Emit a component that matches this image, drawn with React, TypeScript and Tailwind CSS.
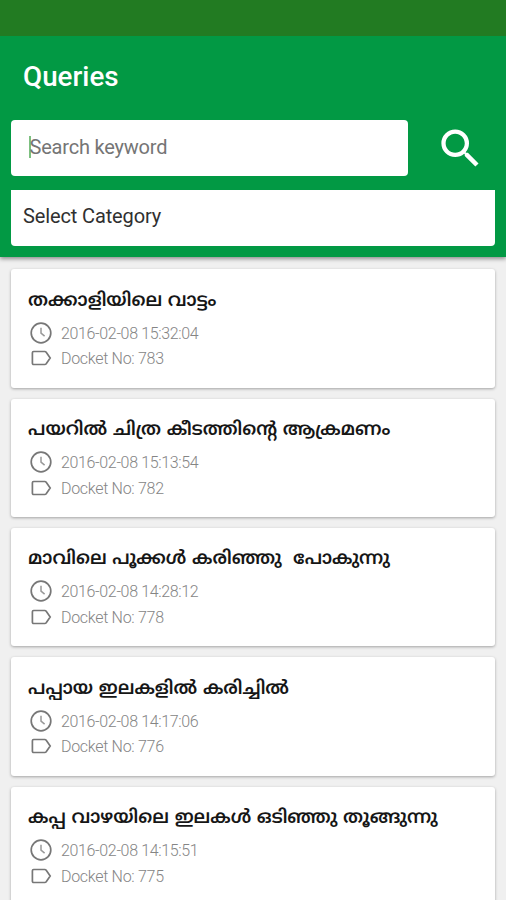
import { MdSearch } from "react-icons/md";

interface Query {
  title: string;
  date: string;
  docket: number;
}

const QUERIES: Query[] = [
  { title: "തക്കാളിയിലെ വാട്ടം", date: "2016-02-08 15:32:04", docket: 783 },
  { title: "പയറിൽ ചിത്ര കീടത്തിന്റെ ആക്രമണം", date: "2016-02-08 15:13:54", docket: 782 },
  { title: "മാവിലെ പൂക്കൾ കരിഞ്ഞു  പോകുന്നു", date: "2016-02-08 14:28:12", docket: 778 },
  { title: "പപ്പായ ഇലകളിൽ കരിച്ചിൽ", date: "2016-02-08 14:17:06", docket: 776 },
  { title: "കപ്പ വാഴയിലെ ഇലകൾ ഒടിഞ്ഞു തൂങ്ങുന്നു", date: "2016-02-08 14:15:51", docket: 775 },
];

function ClockIcon() {
  return (
    <svg viewBox="0 0 24 24" className="size-6 shrink-0" fill="none" stroke="#777" strokeWidth="1.7">
      <circle cx="12" cy="12" r="9.8" />
      <path d="M12 6.8v5.4l3.6 3" stroke="#999" strokeWidth="1.5" />
    </svg>
  );
}

function LabelIcon() {
  return (
    <svg viewBox="0 0 24 24" className="size-6 shrink-0" fill="none" stroke="#777" strokeWidth="1.7">
      <path d="M4.6 5.5h11.2c.6 0 1.1.3 1.4.7l4 5.8-4 5.8c-.3.4-.8.7-1.4.7H4.6c-.7 0-1.2-.5-1.2-1.2V6.7c0-.7.5-1.2 1.2-1.2z" />
    </svg>
  );
}

/**
 * QueryCard
 *
 * One submitted query with its date and docket number.
 */
function QueryCard({ query }: { query: Query }) {
  return (
    <article className="h-[118.3px] shrink-0 rounded-[3px] bg-white pl-[18px] pt-[18.5px] shadow-[0_1px_3px_rgba(0,0,0,0.32)]">
      <h2 className="-ml-px h-[26px] whitespace-pre font-['Noto_Sans_Malayalam','Noto_Sans',sans-serif] text-[18.4px] font-semibold leading-[28px] text-[#161616]">
        {query.title}
      </h2>
      <div className="mt-[7px] flex h-6 items-center gap-2 text-[#858585]">
        <ClockIcon />
        <span className="pt-0.5 text-[16px] font-light tracking-[-0.35px]">{query.date}</span>
      </div>
      <div className="mt-[1.5px] flex h-6 items-center gap-2 text-[#858585]">
        <LabelIcon />
        <span className="pt-0.5 text-[16px] font-light tracking-[-0.3px]">Docket No: {query.docket}</span>
      </div>
    </article>
  );
}

export default function App() {
  return (
    <div className="flex h-[900px] w-[506px] flex-col overflow-hidden bg-[#f0f0f0] font-[Roboto,sans-serif]">
      {/* Status bar */}
      <div className="z-10 h-9 shrink-0 bg-[#227b22]" />

      {/* Header with search and category */}
      <header className="h-[221px] shrink-0 bg-[#029944] px-[11px] shadow-[0_2px_4px_rgba(0,0,0,0.4)]">
        <h1 className="pl-3 pt-[21px] text-[27.8px] font-medium leading-10 text-white">Queries</h1>
        <div className="mt-[23px] flex h-[56px] items-center">
          <div className="flex h-full w-[397px] items-center rounded-[4px] bg-white pl-[18px] pb-0.5">
            <span className="h-[22px] w-[1.5px] bg-[#7dc080]" />
            <span className="-ml-px text-[20px] tracking-[-0.2px] text-[#757575]">Search keyword</span>
          </div>
          <MdSearch className="ml-[27px] size-[51px] text-white" />
        </div>
        <div className="mt-[14px] flex h-[56px] items-center rounded-b-[4px] bg-white pb-1 pl-3">
          <span className="text-[20px] tracking-[-0.13px] text-[#303030]">Select Category</span>
        </div>
      </header>

      {/* Query list */}
      <main className="flex flex-col gap-[11px] px-[11px] pt-[12.4px]">
        {QUERIES.map((query) => (
          <QueryCard key={query.docket} query={query} />
        ))}
      </main>
    </div>
  );
}
